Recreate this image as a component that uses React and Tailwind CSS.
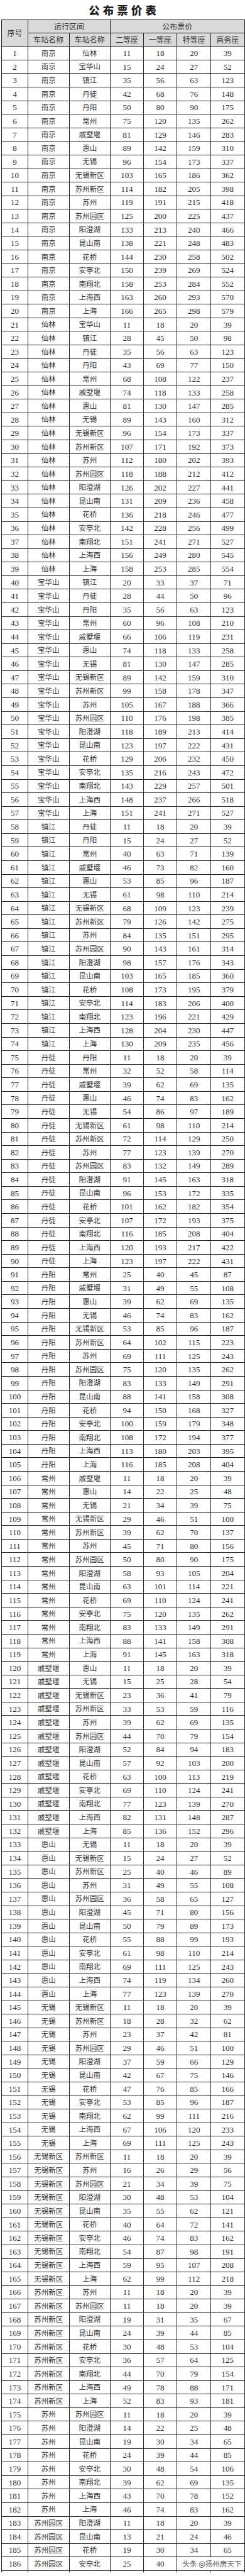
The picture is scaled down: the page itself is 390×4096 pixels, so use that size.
import React from "react";

const RAW = `南京,仙林,11,18,20,39
南京,宝华山,15,24,27,52
南京,镇江,35,56,63,123
南京,丹徒,42,68,76,148
南京,丹阳,50,80,90,175
南京,常州,75,120,135,262
南京,戚墅堰,81,129,146,283
南京,惠山,89,142,159,310
南京,无锡,96,154,173,337
南京,无锡新区,103,165,186,362
南京,苏州新区,114,182,205,398
南京,苏州,119,191,215,418
南京,苏州园区,125,200,225,437
南京,阳澄湖,133,213,240,466
南京,昆山南,138,221,248,483
南京,花桥,144,230,258,502
南京,安亭北,150,239,269,524
南京,南翔北,158,253,284,552
南京,上海西,163,260,293,570
南京,上海,166,265,298,579
仙林,宝华山,11,18,20,39
仙林,镇江,28,45,50,98
仙林,丹徒,35,56,63,123
仙林,丹阳,43,69,77,150
仙林,常州,68,108,122,237
仙林,戚墅堰,74,118,133,258
仙林,惠山,81,130,147,285
仙林,无锡,89,143,160,312
仙林,无锡新区,96,154,173,337
仙林,苏州新区,107,171,192,373
仙林,苏州,112,180,202,393
仙林,苏州园区,118,188,212,412
仙林,阳澄湖,126,202,227,441
仙林,昆山南,131,209,236,458
仙林,花桥,136,218,246,477
仙林,安亭北,142,228,256,499
仙林,南翔北,151,241,271,527
仙林,上海西,156,249,280,545
仙林,上海,158,253,285,554
宝华山,镇江,20,33,37,71
宝华山,丹徒,28,44,50,96
宝华山,丹阳,35,56,63,123
宝华山,常州,60,96,108,210
宝华山,戚墅堰,66,106,119,231
宝华山,惠山,74,118,133,258
宝华山,无锡,81,130,147,285
宝华山,无锡新区,89,142,159,310
宝华山,苏州新区,99,158,178,347
宝华山,苏州,105,167,188,366
宝华山,苏州园区,110,176,198,385
宝华山,阳澄湖,118,189,213,414
宝华山,昆山南,123,197,222,431
宝华山,花桥,129,206,232,450
宝华山,安亭北,135,216,243,472
宝华山,南翔北,143,229,257,501
宝华山,上海西,148,237,266,518
宝华山,上海,151,241,271,527
镇江,丹徒,11,18,20,39
镇江,丹阳,15,24,27,52
镇江,常州,40,63,71,139
镇江,戚墅堰,46,73,82,160
镇江,惠山,53,85,96,187
镇江,无锡,61,98,110,214
镇江,无锡新区,68,109,123,239
镇江,苏州新区,79,126,142,275
镇江,苏州,84,135,151,295
镇江,苏州园区,90,143,161,314
镇江,阳澄湖,98,157,176,343
镇江,昆山南,103,165,185,360
镇江,花桥,108,173,195,379
镇江,安亭北,114,183,206,400
镇江,南翔北,123,196,221,429
镇江,上海西,128,204,230,447
镇江,上海,130,209,235,456
丹徒,丹阳,11,18,20,39
丹徒,常州,32,52,58,114
丹徒,戚墅堰,39,62,69,135
丹徒,惠山,46,74,83,162
丹徒,无锡,54,86,97,189
丹徒,无锡新区,61,98,110,214
丹徒,苏州新区,72,114,129,250
丹徒,苏州,77,123,139,270
丹徒,苏州园区,83,132,149,289
丹徒,阳澄湖,91,145,163,318
丹徒,昆山南,96,153,172,335
丹徒,花桥,101,162,182,354
丹徒,安亭北,107,172,193,375
丹徒,南翔北,116,185,208,404
丹徒,上海西,120,193,217,422
丹徒,上海,123,197,222,431
丹阳,常州,25,40,45,87
丹阳,戚墅堰,31,49,55,108
丹阳,惠山,39,62,69,135
丹阳,无锡,46,74,83,162
丹阳,无锡新区,53,85,96,187
丹阳,苏州新区,64,102,115,223
丹阳,苏州,69,111,125,243
丹阳,苏州园区,75,120,135,262
丹阳,阳澄湖,83,133,149,291
丹阳,昆山南,88,141,158,308
丹阳,花桥,94,150,168,327
丹阳,安亭北,100,159,179,348
丹阳,南翔北,108,172,194,377
丹阳,上海西,113,180,203,395
丹阳,上海,116,185,208,404
常州,戚墅堰,11,18,20,39
常州,惠山,14,22,25,48
常州,无锡,21,34,39,75
常州,无锡新区,29,46,51,100
常州,苏州新区,39,62,70,137
常州,苏州,45,71,80,156
常州,苏州园区,50,80,90,175
常州,阳澄湖,58,93,105,204
常州,昆山南,63,101,114,221
常州,花桥,69,110,124,241
常州,安亭北,75,120,135,262
常州,南翔北,83,133,149,291
常州,上海西,88,141,158,308
常州,上海,91,145,163,318
戚墅堰,惠山,11,18,20,39
戚墅堰,无锡,15,25,28,54
戚墅堰,无锡新区,23,36,41,79
戚墅堰,苏州新区,33,53,59,116
戚墅堰,苏州,39,62,69,135
戚墅堰,苏州园区,44,70,79,154
戚墅堰,阳澄湖,52,84,94,183
戚墅堰,昆山南,57,92,103,200
戚墅堰,花桥,63,100,113,219
戚墅堰,安亭北,69,110,124,241
戚墅堰,南翔北,77,123,139,270
戚墅堰,上海西,82,131,148,287
戚墅堰,上海,85,136,152,296
惠山,无锡,11,18,20,39
惠山,无锡新区,15,24,27,52
惠山,苏州新区,25,40,46,89
惠山,苏州,31,49,55,108
惠山,苏州园区,36,58,65,127
惠山,阳澄湖,45,71,80,156
惠山,昆山南,50,79,89,173
惠山,花桥,55,88,99,193
惠山,安亭北,61,98,110,214
惠山,南翔北,69,111,125,243
惠山,上海西,74,119,134,260
惠山,上海,77,123,139,270
无锡,无锡新区,11,18,20,39
无锡,苏州新区,18,28,32,62
无锡,苏州,23,37,42,81
无锡,苏州园区,29,46,51,100
无锡,阳澄湖,37,59,66,129
无锡,昆山南,42,67,75,146
无锡,花桥,47,76,85,166
无锡,安亭北,53,85,96,187
无锡,南翔北,62,99,111,216
无锡,上海西,67,106,120,233
无锡,上海,69,111,125,243
无锡新区,苏州新区,11,18,20,39
无锡新区,苏州,16,26,29,56
无锡新区,苏州园区,21,34,39,75
无锡新区,阳澄湖,30,48,53,104
无锡新区,昆山南,35,55,62,121
无锡新区,花桥,40,64,72,141
无锡新区,安亭北,46,74,83,162
无锡新区,南翔北,54,87,98,191
无锡新区,上海西,59,95,107,208
无锡新区,上海,62,99,112,218
苏州新区,苏州,11,18,20,39
苏州新区,苏州园区,11,18,20,39
苏州新区,阳澄湖,19,31,35,67
苏州新区,昆山南,24,39,44,85
苏州新区,花桥,30,48,53,104
苏州新区,安亭北,36,57,64,125
苏州新区,南翔北,44,70,79,154
苏州新区,上海西,49,78,88,171
苏州新区,上海,52,83,93,181
苏州,苏州园区,11,18,20,39
苏州,阳澄湖,14,22,25,48
苏州,昆山南,19,30,34,65
苏州,花桥,24,39,44,85
苏州,安亭北,30,48,54,106
苏州,南翔北,39,62,69,135
苏州,上海西,43,70,78,152
苏州,上海,46,74,83,162
苏州园区,阳澄湖,11,18,20,39
苏州园区,昆山南,13,21,24,46
苏州园区,花桥,19,30,34,65
苏州园区,安亭北,25,40,,`;

const ROWS = RAW.split("\n").map((l) => l.split(","));

const B = "border border-[#222]";
const NUM =
  "font-['Liberation_Serif','Noto_Sans_CJK_SC',serif] text-[13px] text-[#2e2e2e]";
const CJK = "font-['Noto_Sans_CJK_SC',sans-serif] text-[11.5px] text-[#333]";
const HEAD =
  "font-['Noto_Sans_CJK_SC',sans-serif] text-[12px] text-[#333] bg-[#d9d9d9]";

export default function App() {
  return (
    <div className="w-[390px] bg-white">
      <div className="h-[31px] flex items-center justify-center">
        <span className="font-['Noto_Sans_CJK_SC',sans-serif] font-black text-[17.5px] tracking-[5px] pl-[5px] text-[#1e1e1e] leading-none">
          公布票价表
        </span>
      </div>
      <table className="table-fixed border-collapse w-[387px] ml-[2px] leading-none">
        <colgroup>
          <col className="w-[42px]" />
          <col className="w-[65.5px]" />
          <col className="w-[65.5px]" />
          <col className="w-[52.8px]" />
          <col className="w-[53.5px]" />
          <col className="w-[53.7px]" />
          <col className="w-[53.5px]" />
        </colgroup>
        <thead>
          <tr className="h-[20.5px]">
            <th rowSpan={2} className={`${B} ${HEAD} font-normal p-0`}>
              序号
            </th>
            <th colSpan={2} className={`${B} ${HEAD} font-normal p-0`}>
              运行区间
            </th>
            <th colSpan={4} className={`${B} ${HEAD} font-normal p-0`}>
              公布票价
            </th>
          </tr>
          <tr className="h-[21.8px]">
            {["车站名称", "车站名称", "二等座", "一等座", "特等座", "商务座"].map(
              (h, i) => (
                <th key={i} className={`${B} ${HEAD} font-normal p-0`}>
                  {h}
                </th>
              )
            )}
          </tr>
        </thead>
        <tbody>
          {ROWS.map((r, i) => {
            const last = i === ROWS.length - 1;
            return (
              <tr key={i} className="h-[21.58px]">
                <td className={`${B} ${NUM} p-0 text-center`}>{i + 1}</td>
                <td className={`${B} ${CJK} p-0 text-center`}>{r[0]}</td>
                <td className={`${B} ${CJK} p-0 text-center`}>{r[1]}</td>
                <td className={`${B} ${NUM} p-0 text-center`}>{r[2]}</td>
                <td className={`${B} ${NUM} p-0 text-center`}>{r[3]}</td>
                {last ? (
                  <td colSpan={2} className={`${B} p-0 relative`}>
                    <span className="absolute right-[4px] top-1/2 -translate-y-1/2 whitespace-nowrap font-['Noto_Sans_CJK_SC',sans-serif] text-[11.5px] text-[#555] [text-shadow:0_0_2px_#fff,0_0_2px_#fff]">
                      头条 @扬州房天下
                    </span>
                  </td>
                ) : (
                  <>
                    <td className={`${B} ${NUM} p-0 text-center`}>{r[4]}</td>
                    <td className={`${B} ${NUM} p-0 text-center`}>{r[5]}</td>
                  </>
                )}
              </tr>
            );
          })}
          <tr className="h-[3px]">
            {[0, 1, 2, 3, 4, 5, 6].map((k) => (
              <td
                key={k}
                className="border-x border-t border-b-0 border-[#222] p-0"
              />
            ))}
          </tr>
        </tbody>
      </table>
    </div>
  );
}
